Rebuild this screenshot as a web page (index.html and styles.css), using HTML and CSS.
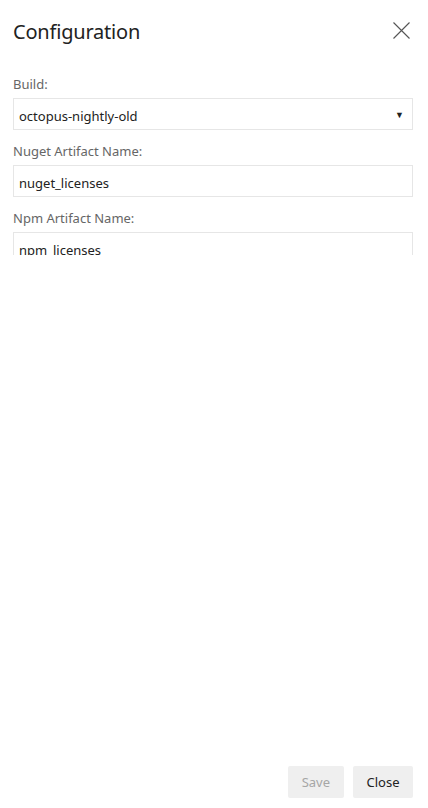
FILE: index.html
```html
<!DOCTYPE html>
<html>
<head>
<meta charset="utf-8">
<link rel="stylesheet" href="styles.css">
</head>
<body>
<div class="dialog">
  <div class="header">
    <h1 class="title">Configuration</h1>
    <button class="close-x" aria-label="Close">
      <svg width="17" height="17" viewBox="0 0 17 17"><path d="M0.5 0.5L16.5 16.5M16.5 0.5L0.5 16.5" stroke="#555" stroke-width="1.1" fill="none"/></svg>
    </button>
  </div>
  <div class="content">
    <div class="field">
      <label class="label">Build:</label>
      <div class="select"><span>octopus-nightly-old</span><span class="arrow">▼</span></div>
    </div>
    <div class="field">
      <label class="label">Nuget Artifact Name:</label>
      <div class="input">nuget_licenses</div>
    </div>
    <div class="field">
      <label class="label">Npm Artifact Name:</label>
      <div class="input">npm_licenses</div>
    </div>
  </div>
  <div class="footer">
    <button class="btn disabled">Save</button>
    <button class="btn">Close</button>
  </div>
</div>
</body>
</html>
```
FILE: styles.css
```css
* { box-sizing: border-box; }
html, body { margin: 0; padding: 0; background: #fff; }
body {
  font-family: "Noto Sans", "Open Sans", sans-serif;
  color: #333;
}
.dialog {
  height: 808px;
  display: flex;
  flex-direction: column;
  padding: 0 15px 10px 13px;
}
.header {
  display: flex;
  justify-content: space-between;
  align-items: flex-start;
  height: 75px;
  padding-top: 17px;
}
.title {
  margin: 0;
  font-size: 20px;
  font-weight: 400;
  line-height: 30px;
  color: #222;
  letter-spacing: -0.2px;
}
.close-x {
  border: 0;
  background: none;
  padding: 0;
  margin-top: 5px;
  margin-right: 3px;
  width: 17px;
  height: 17px;
  display: flex;
}
.content {
  height: 180px;
  overflow: hidden;
}
.field { display: flex; flex-direction: column; }
.label {
  font-size: 13px;
  line-height: 18px;
  color: #666;
  margin-bottom: 5px;
}
.field + .field { margin-top: 12px; }
.select, .input {
  height: 32px;
  border: 1px solid #e6e6e6;
  font-size: 13px;
  color: #222;
  padding: 3px 8px 0 5px;
  display: flex;
  align-items: center;
  justify-content: space-between;
}
.arrow { font-size: 9px; color: #222; margin-top: -2px; }
.footer {
  margin-top: auto;
  display: flex;
  justify-content: flex-end;
  gap: 9px;
}
.btn {
  font-family: inherit;
  font-size: 13px;
  height: 32px;
  border: 0;
  border-radius: 2px;
  background: #efefef;
  color: #222;
  padding: 0 13.5px;
}
.btn.disabled { color: #a6a6a6; padding: 0 14px; }
```
